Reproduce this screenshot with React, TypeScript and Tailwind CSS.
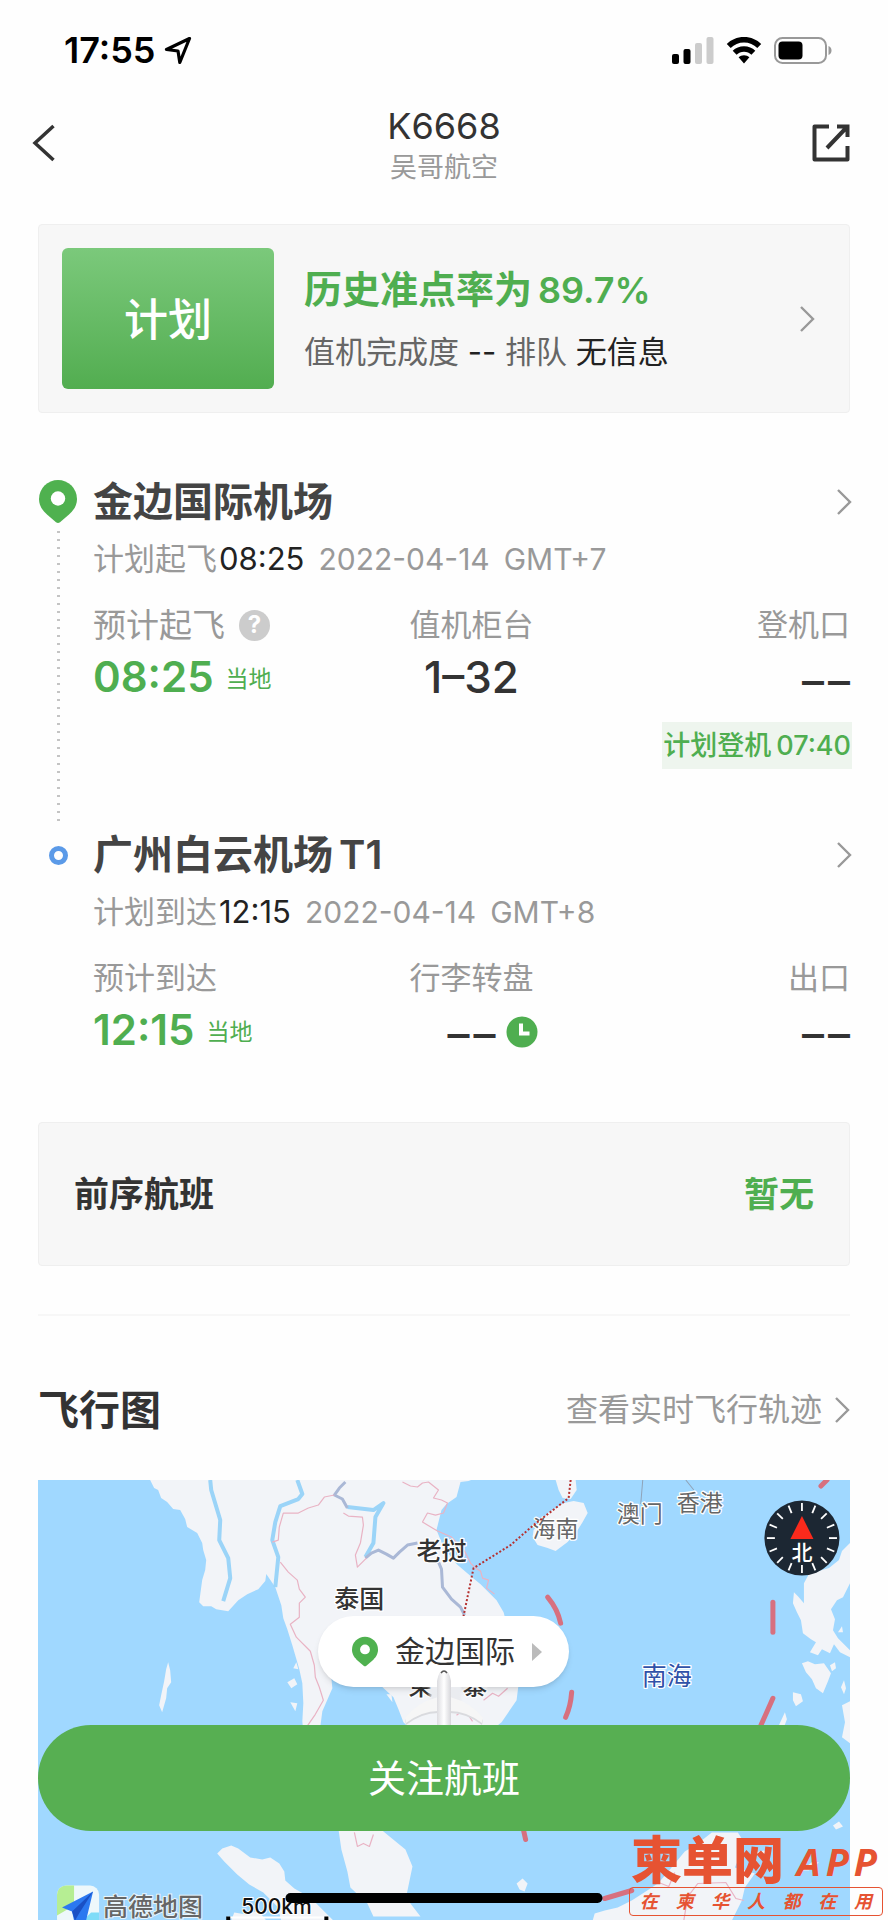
import type { ReactNode } from "react";

const Chevron = ({ className = "" }: { className?: string }) => (
  <svg viewBox="0 0 16 28" className={`w-4 h-7 shrink-0 ${className}`} fill="none" stroke="#999" strokeWidth="2.4">
    <path d="M2 2l12 12L2 26" />
  </svg>
);

const Pin = ({ className = "" }: { className?: string }) => (
  <svg viewBox="0 0 38 43" className={`shrink-0 ${className}`}>
    <path
      d="M19 0a19 19 0 0 1 19 19c0 7-4 12-8 15.500L21 42.200q-2 1.500-4 0L8 34.500C4 31 0 26 0 19A19 19 0 0 1 19 0z"
      fill="#4fb14f"
    />
    <circle cx="19" cy="18.500" r="7.200" fill="#fff" />
  </svg>
);

const StatusBar = () => (
  <div className="flex items-center justify-between pt-7 pl-16 pr-14 leading-[44px]">
    <div className="flex items-center gap-2 text-black">
      <span className="text-[36px] font-semibold">17:55</span>
      <svg viewBox="0 0 28 28" className="w-7 h-7" fill="none" stroke="#000" strokeWidth="3.200" strokeLinejoin="round">
        <path d="M25.500 2.500L2.500 13.500l11.500 1.500 1.800 11.500z" />
      </svg>
    </div>
    <div className="flex items-center gap-3">
      <svg viewBox="0 0 42 27" className="w-[42px] h-[27px]">
        <rect x="0" y="17" width="7" height="10" rx="2" fill="#000" />
        <rect x="11.500" y="12" width="7" height="15" rx="2" fill="#000" />
        <rect x="23" y="6" width="7" height="21" rx="2" fill="#ccc" />
        <rect x="34.500" y="0" width="7" height="27" rx="2" fill="#ccc" />
      </svg>
      <svg viewBox="0 0 36 27" className="w-9 h-[27px]">
        <path d="M18 0C11 0 5 2.700.800 7l3.900 4C8.200 7.500 12.800 5.500 18 5.500s9.800 2 13.300 5.500l3.900-4C31 2.700 25 0 18 0z" />
        <path d="M18 9.200c-4.400 0-8.400 1.700-11.300 4.500l3.900 4c2-1.900 4.500-3 7.400-3s5.400 1.100 7.400 3l3.900-4c-2.900-2.800-6.900-4.500-11.300-4.500z" />
        <path d="M18 18.200c-2.100 0-4 .8-5.400 2.100L18 26.500l5.400-6.200c-1.400-1.300-3.300-2.100-5.400-2.100z" />
      </svg>
      <svg viewBox="0 0 58 27" className="w-[58px] h-[27px]">
        <rect x="1" y="1" width="51" height="25" rx="7.500" fill="none" stroke="#999" strokeWidth="2" />
        <rect x="4.500" y="4.500" width="24" height="18" rx="4" fill="#000" />
        <path d="M54.500 9v9c2-.8 3-2.500 3-4.500s-1-3.700-3-4.500z" fill="#999" />
      </svg>
    </div>
  </div>
);

const Header = () => (
  <header className="flex items-center justify-between px-8 pt-8">
    <button aria-label="返回" className="flex w-12 h-12 items-center pb-[6px]">
      <svg viewBox="0 0 24 38" className="w-6 h-[38px]" fill="none" stroke="#333" strokeWidth="3.500">
        <path d="M21.500 2L3 19l18.500 17" />
      </svg>
    </button>
    <div className="text-center">
      <h1 className="text-[36px] leading-[44px] text-[#333]">K6668</h1>
      <p className="text-[27px] leading-10 text-[#999]">吴哥航空</p>
    </div>
    <button aria-label="分享" className="flex w-12 h-12 items-center justify-end pr-[6px] pb-[6px]">
      <svg viewBox="0 0 38 38" className="w-[38px] h-[38px]" fill="none" stroke="#333" strokeWidth="4">
        <path d="M17 2.500H2.500v33h33V22" strokeLinejoin="round" />
        <path d="M25 2.500h10.500V13M35 3L15 24" />
      </svg>
    </button>
  </header>
);

type StopProps = {
  marker: ReactNode;
  name: string;
  terminal?: string;
  planLabel: string;
  time: string;
  date: string;
  zone: string;
  children: ReactNode;
};

const Stop = ({ marker, name, terminal, planLabel, time, date, zone, children }: StopProps) => (
  <li className="flex gap-[15px]">
    <div className="flex w-10 shrink-0 flex-col items-center">{marker}</div>
    <div className="min-w-0 flex-1">
      <a href="#airport" className="flex items-center justify-between">
        <h2 className="flex gap-[6px] text-[40px] leading-[50px] font-semibold text-[#444]">
          {name}
          {terminal && <span>{terminal}</span>}
        </h2>
        <Chevron className="-mr-[2px]" />
      </a>
      <p className="mt-3 text-[31px] leading-10 text-[#999]">
        {planLabel}
        <span className="ml-[2px] text-[#222]">{time}</span>
        <span className="ml-[14px] text-[30px]">{date}</span>
        <span className="ml-[14px] text-[30px]">{zone}</span>
      </p>
      <div className="mt-[26px] grid grid-cols-[1fr_auto_1fr]">{children}</div>
    </div>
  </li>
);

const Label = ({ children }: { children: ReactNode }) => (
  <div className="text-[31px] leading-10 text-[#999]">{children}</div>
);

const Value = ({ children }: { children: ReactNode }) => (
  <div className="mt-2 text-[44px] leading-[48px] font-medium text-[#333]">{children}</div>
);

const Dashes = () => (
  <span className="mt-1 inline-flex gap-1">
    <span>–</span>
    <span>–</span>
  </span>
);

const LocalTime = ({ time }: { time: string }) => (
  <div className="mt-[6px] flex items-center gap-3 leading-[48px] text-[#4fae50]">
    <span className="text-[42px] font-semibold">{time}</span>
    <span className="pt-1 text-[23px]">当地</span>
  </div>
);

const Route = () => (
  <ul className="mt-16">
    <Stop
      marker={
        <>
          <Pin className="mt-[3px] w-[38px] h-[43px]" />
          <div className="mt-2 mb-[7px] w-[3px] flex-1 bg-[linear-gradient(#c4c4c4_2px,transparent_2px)] bg-[length:3px_8px]" />
        </>
      }
      name="金边国际机场"
      planLabel="计划起飞"
      time="08:25"
      date="2022-04-14"
      zone="GMT+7"
    >
      <div>
        <Label>
          <span className="flex items-center gap-[14px]">
            <span className="text-[33px]">预计起飞</span>
            <span className="flex w-[31px] h-[31px] items-center justify-center rounded-full bg-[#ccc] text-2xl font-bold text-white">
              ?
            </span>
          </span>
        </Label>
        <LocalTime time="08:25" />
      </div>
      <div className="text-center">
        <Label>值机柜台</Label>
        <Value>1–32</Value>
      </div>
      <div className="text-right">
        <Label>登机口</Label>
        <Value>
          <Dashes />
        </Value>
        <p className="-mr-[2px] mt-[17px] mb-[61px] ml-auto flex w-fit gap-[5px] bg-[#eef5ee] px-px text-[27px] leading-[47px] font-medium text-[#4fae50]">
          计划登机<span>07:40</span>
        </p>
      </div>
    </Stop>
    <Stop
      marker={<span className="mt-4 w-[19px] h-[19px] rounded-full border-[5px] border-[#5b9ae8]" />}
      name="广州白云机场"
      terminal="T1"
      planLabel="计划到达"
      time="12:15"
      date="2022-04-14"
      zone="GMT+8"
    >
      <div>
        <Label>预计到达</Label>
        <LocalTime time="12:15" />
      </div>
      <div className="text-center">
        <Label>行李转盘</Label>
        <Value>
          <span className="relative inline-block">
            <Dashes />
            <svg viewBox="0 0 32 32" className="absolute top-[10px] left-full ml-[10px] w-8 h-8">
              <circle cx="16" cy="16" r="15.500" fill="#4fae50" />
              <path d="M15 7.500v10h8.500" fill="none" stroke="#fff" strokeWidth="4" />
            </svg>
          </span>
        </Value>
      </div>
      <div className="text-right">
        <Label>出口</Label>
        <Value>
          <Dashes />
        </Value>
      </div>
    </Stop>
  </ul>
);

const land = [
  // Indochina and the Malay peninsula
  "M112 0l4 8 4 2 3 8 6 4 6 7 7 1 5 9 2 8 10 6 5 10 1 7 3 10-1 10-3 10-3 22 4 4 8 0 5 3 12 2 10-11 9-6 11-5 7-8 1-7 9 13 6 18 2 13 4 11 5 16 7 24 3 14 1 20-1 18 4 45 32 62 3 21 6 22 3 16 17 16 6 13h47l-10-13-4-8 6-29-7-17-22-18-45-55-18-50 2-15 10-23-2-20 20-14 30 31 13 12 5 12 5 13 30 30 40-8 28-22 15-22 2-16-1-18-14-54-7-12-16-16-10-8-14-12-13-17-7-17 5-20 5-6 10-7 4-15 8-1 10-4z",
  // Leizhou and Hainan
  "M517 0l3 10 4 8 8 1 6-9-1-10z",
  "M495 50l7-8 7-9 16-10 10-2 10 2 4 10-5 9-5 8-10 12-12 9-8-3-10-3-5-8z",
  // Luzon and its neighbours
  "M811 63l-8 8-3 9-10 8-20 6-5 9 0 20-6-7-4-4-1 11 4 9 4 8 2 13 8 6 5 3-6 10 8 3 4-6 8 4 4-9 6 8 10 5 0-7-12-12-5-8 2-11-4-10 6-9 6-3 7-14z",
  "M763 183l6-2 7 3 9-1 7 10-3 8-5 12-7-5-4-9-6-7z",
  "M754 212l8 2 2 7-7 5-3-6zM740 245l6-13 2 7-3 8zM803 225l8-4v42l-8-6 3-15zM791 185l5-3 1 6-4 3zM802 207l3-7 2 8-2 6zM799 152l4-6 1 6z",
  // Andaman islands
  "M130 182l2 8 1 12-4 6-1 10-4 14-3-7 2-10 3-14 2-12z",
  // Sumatra and the Riau islands
  "M184 368l9-3 7 3 12 9 12 2 8-2 9 6 5 8 1 9 9 8 16 9 23 23h-52l-4-14-14-14-14-8-12-10-13-13-7-8zM193 440l3-8 12 2 12-4 8 10z",
  // Borneo
  "M554 440l2-7 10-3 13-3 14-7 14-9 12-8 9-10 8-10 10-12 13-8 14-11h26l7 11-4 10-6 14 20 6-10 14-3 13-10 20z",
  "M478 403l6-5 5 5-3 8-5-2zM762 390l12-9 6 1-10 8zM716 372l9-2 4 2-8 2zM794 345l6-4 4 5-7 3z",
  "M249 202l7-4 3 6-6 4zM255 188l3-6 2 7zM252 222l7 1-2 8zM348 214l5 0 1 8z",
];

const rivers = [
  "M172 0l1 10 3 10 6 20-1 20 9 18 2 20-7 23",
  "M259 0l5 14-4 5-18 7-5 16-3 18 6 17-3 30",
  "M309 27l26 3 10-7-8 14-2 26-8 14",
];

const mekong = [
  "M307 2l-6 6-5 7 8 4 5 9",
  "M327 78l6-5 7-3 8 4 7 4 6-6 8-7 10-2",
  "M400 82l3 7 1 18 9 12 9 8 4 8",
];

const borders = [
  "M296 15l-10 2-6 8-10 3-10 5-15 0-4 14-1 13-6 2",
  "M242 82l8 10 9 8 2 9 6 8-6 6 0 14-9 7 6 13 14 14 4 14 1 12 4 10 4 13-8 14-9 13",
  "M305 33l5 3 14 1 1 8-3 18-5 12 2 12 9-9",
  "M364 2l8 4 7 1 5-4 6-1 10 8-5 8 8 2 6 3-4 10-8 2-8-2-5 9 15 9 14 6 13 14 6 12 5 5 5 3 2 7 6 2-2 8 8 6",
  "M445 220l9-7 6 3 9-8M316 352l3 14 6-3 6 3 4-12M418 235l8-6 8 12",
  "M645 440l4-24 10-13 28-1 10 16 8 2M620 402l10 4 6-14",
];

const nineDash = [
  "M509 117q10 12 13 26",
  "M734 122v30",
  "M533 212q-1 14-6 25",
  "M734 218l-12 27",
  "M788 0l-6 6",
  "M485 350l2 9",
  "M566 418l27-8",
];

const FlightMap = () => (
  <svg
    viewBox="0 0 811 440"
    preserveAspectRatio="xMidYMin slice"
    className="block w-full h-[440px]"
    role="img"
    aria-label="飞行图"
    fill="none"
  >
    <rect width="811" height="440" fill="#a0d8ff" />
    <g fill="#f2f4f8" strokeLinejoin="round">
      {land.map((d) => (
        <path key={d} d={d} />
      ))}
    </g>
    <g stroke="#9bd4f8" strokeWidth="4" strokeLinejoin="round">
      {rivers.map((d) => (
        <path key={d} d={d} />
      ))}
    </g>
    <g stroke="#aab8d6" strokeWidth="3" strokeLinejoin="round">
      {mekong.map((d) => (
        <path key={d} d={d} />
      ))}
    </g>
    <g stroke="#e9b3c4" strokeWidth="1.200" strokeLinejoin="round">
      {borders.map((d) => (
        <path key={d} d={d} />
      ))}
    </g>
    <path d="M604 0l-2 24M647 0l8 10" stroke="#8fa3b8" />
    <g stroke="#d7707f" strokeWidth="5" strokeLinecap="round">
      {nineDash.map((d) => (
        <path key={d} d={d} />
      ))}
    </g>

    <g fontSize="23" fill="#666" stroke="#fff" strokeWidth="2.500" paintOrder="stroke" strokeLinejoin="round">
      <text x="494" y="57">海南</text>
      <text x="578" y="42">澳门</text>
      <text x="638" y="31">香港</text>
      <g fontSize="25" fontWeight="500" fill="#333">
        <text x="378" y="80">老挝</text>
        <text x="296" y="128">泰国</text>
        <text x="370 397 424" y="215">柬埔寨</text>
      </g>
      <text x="603" y="205" fontSize="25" fill="#2f51a8">南海</text>
    </g>
    <path d="M532 0l-2 18-35 27-23 20-37 23-10 48" stroke="#b5302f" strokeWidth="2" strokeDasharray="2 2" />

    {/* compass */}
    <g transform="translate(763 58)">
      <circle r="37.500" fill="#1c2733" />
      {Array.from({ length: 16 }, (_, i) => (
        <path key={i} d="M0-27v-8" stroke="#fff" strokeWidth="1.800" transform={`rotate(${i * 22.5})`} />
      ))}
      <path d="M0-22L11.500 1h-23z" fill="#fa2a1c" />
      <text y="22" textAnchor="middle" fontSize="21" fontWeight="500" fill="#fff">北</text>
    </g>

    {/* amap logo and scale */}
    <rect x="19" y="405" width="42" height="42" rx="9" fill="#eef8fb" />
    <path d="M28 405h8v20l-17 10v-21a9 9 0 0 1 9-9z" fill="#b6ee93" />
    <path d="M45 440l8-8h8v8z" fill="#7fdcf8" />
    <path d="M55 411L24 427l10 4 2 9h12z" fill="#2b78f0" />
    <path d="M55 411L34 431l3 9 4-7z" fill="#1a50c4" />
    <text x="65" y="435" fontSize="25" fontWeight="500" fill="#666" stroke="#e8f4fb" strokeWidth="2" paintOrder="stroke">高德地图</text>
    <text x="203" y="433" fontSize="21" fontWeight="500" fill="#111" stroke="#fff" strokeWidth="2" paintOrder="stroke">500km</text>
    <path d="M190 440v-3h99v3" stroke="#fff" strokeWidth="2" />
    <path d="M190 436v4M288 436v4" stroke="#000" strokeWidth="4" />
  </svg>
);

const Plane = () => (
  <svg viewBox="0 0 84 60" className="absolute left-1/2 top-[189px] z-10 -ml-[42px] w-[84px] h-[60px]">
    <defs>
      <linearGradient id="fuselage">
        <stop offset="0" stopColor="#dcdce0" />
        <stop offset="0.5" stopColor="#fff" />
        <stop offset="1" stopColor="#d6d6da" />
      </linearGradient>
      <linearGradient id="glow">
        <stop offset="0" stopColor="#eef0f4" stopOpacity="0" />
        <stop offset="0.15" stopColor="#eaecf0" />
        <stop offset="0.9" stopColor="#eaecf0" />
        <stop offset="1" stopColor="#eef0f4" stopOpacity="0" />
      </linearGradient>
    </defs>
    <rect x="25" y="18" width="36" height="14" fill="url(#glow)" />
    <path d="M36 30Q14 36 3 51l1 5q16-12 32-12zM48 30q22 6 33 21l-1 5Q64 44 48 44z" fill="#d9dade" />
    <path d="M36 28Q14 34 3 49l1 5q16-12 32-12zM48 28q22 6 33 21l-1 5Q64 42 48 42z" fill="#f6f6f6" />
    <path d="M35 60V12Q37 1 42 1t7 11v48z" fill="url(#fuselage)" />
    <path d="M39 4q3-4 6 0" fill="none" stroke="#555" strokeWidth="1.500" />
  </svg>
);

const Watermark = () => (
  <div className="absolute right-[5px] bottom-1 z-20 w-[254px] text-[#e65332]">
    <div className="flex items-center justify-between pr-[6px] pl-[2px]">
      <span className="text-[51px] leading-[52px] font-black">柬单网</span>
      <span className="flex gap-[5px] font-['Noto_Sans',sans-serif] text-[38px] leading-[48px] font-bold italic">
        <span>A</span>
        <span>P</span>
        <span>P</span>
      </span>
    </div>
    <div className="flex justify-between rounded-sm border border-[#e65332] px-[10px] text-[18px] leading-[27px] font-semibold italic">
      {[..."在柬华人都在用"].map((char, i) => (
        <span key={i}>{char}</span>
      ))}
    </div>
  </div>
);

export default function App() {
  return (
    <div
      lang="zh-CN"
      className="relative min-h-screen overflow-hidden bg-[#fefefe] font-['Inter','Noto_Sans_CJK_SC',sans-serif] text-[#333]"
    >
      <StatusBar />
      <Header />

      <main className="px-[38px]">
        <a
          href="#punctuality"
          className="mt-9 flex items-center rounded-sm border border-[#efefef] bg-[#f7f7f7] py-[23px] pr-[34px] pl-[23px]"
        >
          <span className="rounded-md bg-linear-to-b from-[#7bc97b] to-[#52ad50] px-[62px] pt-1 text-[44px] leading-[137px] font-medium text-white">
            计划
          </span>
          <span className="ml-[30px] flex-1 pt-1">
            <span className="flex items-baseline gap-[6px] text-[38px] leading-[54px] font-semibold text-[#4fae50]">
              历史准点率为 <span className="text-[36px]">89.7%</span>
            </span>
            <span className="mt-2 block text-[31px] leading-[54px] text-[#666]">
              值机完成度 <span className="text-[#222]">--</span> 排队 <span className="text-[#222]">无信息</span>
            </span>
          </span>
          <Chevron />
        </a>

        <Route />

        <section className="mt-16 flex items-center justify-between rounded-sm border border-[#efefef] bg-[#f7f7f7] px-[35px] py-[49px] text-[35px] leading-[44px] font-semibold">
          <h2>前序航班</h2>
          <span className="text-[#4fae50]">暂无</span>
        </section>

        <hr className="mt-12 border-t-2 border-[#f7f7f7]" />

        <div className="mt-16 flex items-center justify-between leading-[60px]">
          <h2 className="text-[41px] font-semibold">飞行图</h2>
          <a href="#track" className="flex items-center gap-3 text-[32px] text-[#999]">
            查看实时飞行轨迹
            <Chevron />
          </a>
        </div>

        <section className="relative mt-10">
          <FlightMap />
          <button className="absolute top-[136px] left-1/2 -ml-[126px] flex items-center gap-[17px] rounded-full bg-white pr-[27px] pl-[34px] text-[30px] leading-[71px] whitespace-nowrap shadow-md">
            <Pin className="w-[26px] h-[31px]" />
            金边国际
            <svg viewBox="0 0 10 18" className="w-[10px] h-[18px]">
              <path d="M0 0l10 9-10 9z" fill="#bbb" />
            </svg>
          </button>
          <Plane />
          <button className="absolute inset-x-0 top-[245px] z-10 rounded-full bg-[#57af52] text-[38px] leading-[106px] text-white">
            关注航班
          </button>
        </section>
      </main>

      <div className="absolute bottom-[17px] left-1/2 z-20 h-[10px] w-[317px] -translate-x-1/2 rounded-full bg-black" />
      <Watermark />
    </div>
  );
}
